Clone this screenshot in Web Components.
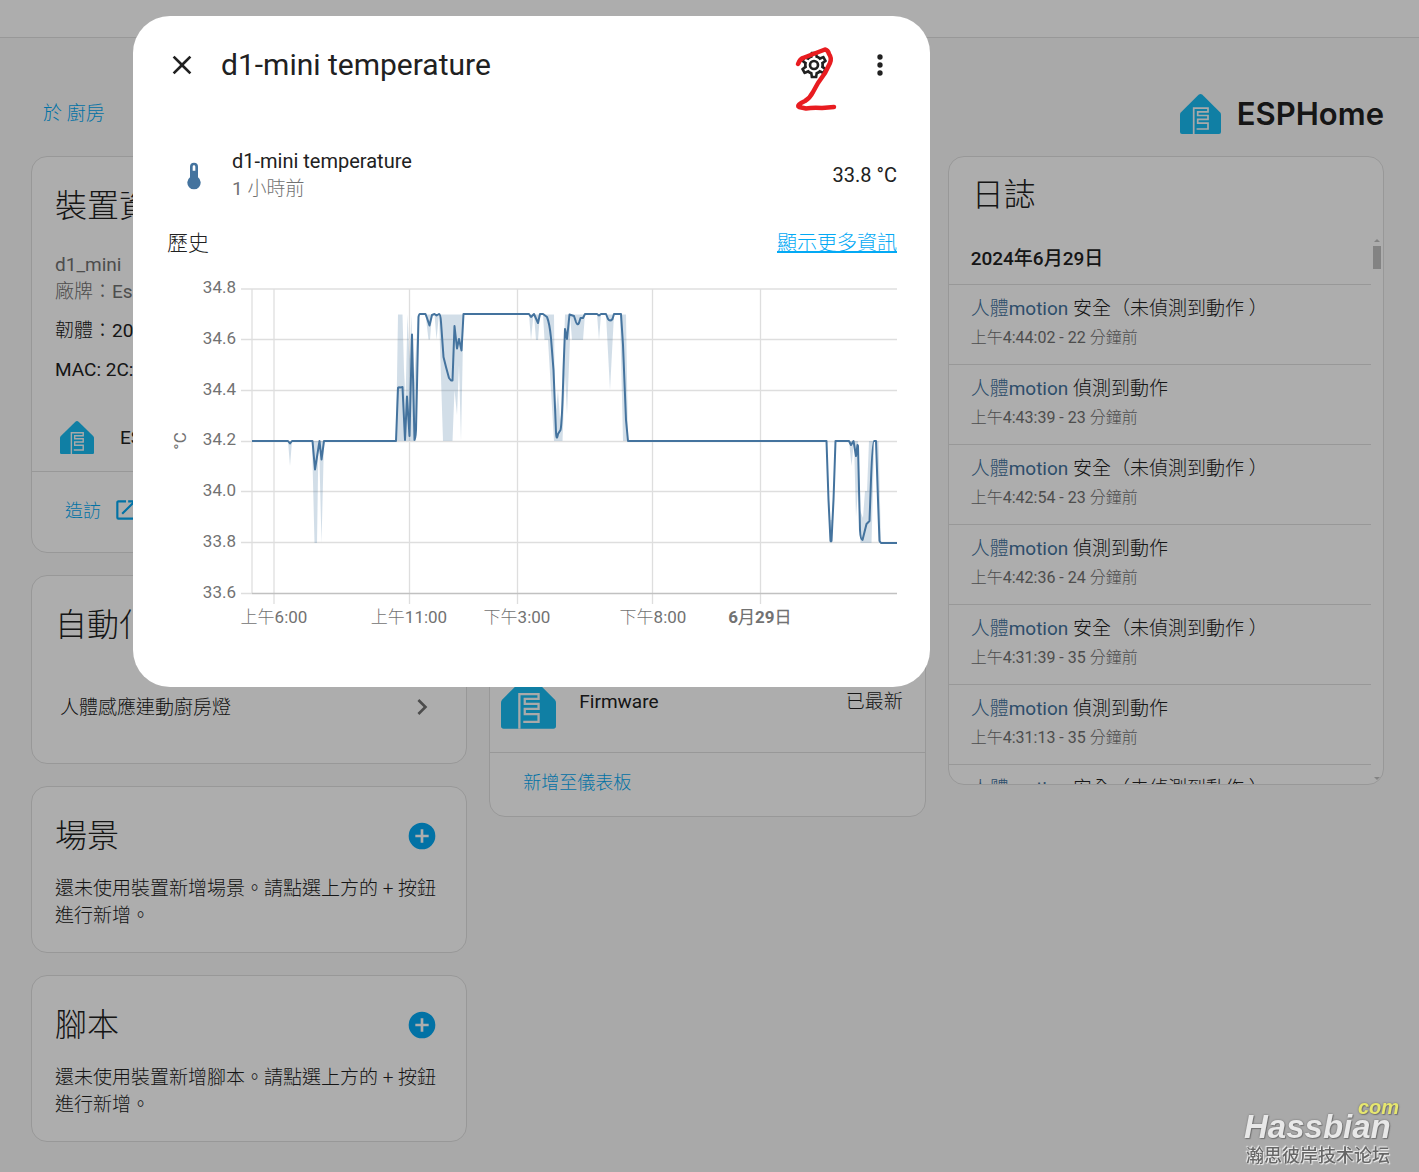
<!DOCTYPE html>
<html lang="zh-Hant">
<head>
<meta charset="utf-8">
<title>d1-mini</title>
<style>
html, body { margin: 0; height: 100%; }
body {
  --primary: #03a9f4; --text: #212121; --text2: #727272; --divider: #e0e0e0; --state: #44739e;
  background: #fafafa; color: var(--text); overflow: hidden;
  font: 400 19px/27px Roboto, "Noto Sans CJK TC Light", "Noto Sans CJK TC", sans-serif;
}
</style>
</head>
<body>
<device-page></device-page>
<more-info-dialog></more-info-dialog>
<site-mark></site-mark>
<script>
const define = (name, html, setup) => {
  const t = document.createElement('template');
  t.innerHTML = '<style>*{box-sizing:border-box}button{font:inherit;color:inherit;background:none;border:0;padding:0;margin:0;cursor:pointer}h1,h2,h3,p{margin:0;font-weight:400}a{color:var(--primary);text-decoration:none}</style>' + html;
  customElements.define(name, class extends HTMLElement {
    constructor() {
      super();
      const content = t.content.cloneNode(true);
      if (setup) setup(this, content);
      this.attachShadow({ mode: 'open' }).append(content);
    }
  });
};

const ICONS = {
  close: 'M19,6.41L17.59,5L12,10.59L6.41,5L5,6.41L10.59,12L5,17.59L6.41,19L12,13.41L17.59,19L19,17.59L13.41,12L19,6.41Z',
  cog: 'M12,8A4,4 0 0,1 16,12A4,4 0 0,1 12,16A4,4 0 0,1 8,12A4,4 0 0,1 12,8M12,10A2,2 0 0,0 10,12A2,2 0 0,0 12,14A2,2 0 0,0 14,12A2,2 0 0,0 12,10M10,22C9.75,22 9.54,21.82 9.5,21.58L9.13,18.93C8.5,18.68 7.96,18.34 7.44,17.94L4.95,18.95C4.73,19.03 4.46,18.95 4.34,18.73L2.34,15.27C2.21,15.05 2.27,14.78 2.46,14.63L4.57,12.97L4.5,12L4.57,11L2.46,9.37C2.27,9.22 2.21,8.95 2.34,8.73L4.34,5.27C4.46,5.05 4.73,4.96 4.95,5.05L7.44,6.05C7.96,5.66 8.5,5.32 9.13,5.07L9.5,2.42C9.54,2.18 9.75,2 10,2H14C14.25,2 14.46,2.18 14.5,2.42L14.87,5.07C15.5,5.32 16.04,5.66 16.56,6.05L19.05,5.05C19.27,4.96 19.54,5.05 19.66,5.27L21.66,8.73C21.79,8.95 21.73,9.22 21.54,9.37L19.43,11L19.5,12L19.43,13L21.54,14.63C21.73,14.78 21.79,15.05 21.66,15.27L19.66,18.73C19.54,18.95 19.27,19.04 19.05,18.95L16.56,17.95C16.04,18.34 15.5,18.68 14.87,18.93L14.5,21.58C14.46,21.82 14.25,22 14,22H10M11.25,4L10.88,6.61C9.68,6.86 8.62,7.5 7.85,8.39L5.44,7.35L4.69,8.65L6.8,10.2C6.4,11.37 6.4,12.64 6.8,13.8L4.68,15.36L5.43,16.66L7.86,15.62C8.63,16.5 9.68,17.14 10.87,17.38L11.24,20H12.76L13.13,17.39C14.32,17.14 15.37,16.5 16.14,15.62L18.57,16.66L19.32,15.36L17.2,13.81C17.6,12.64 17.6,11.37 17.2,10.2L19.31,8.65L18.56,7.35L16.15,8.39C15.38,7.5 14.32,6.86 13.12,6.62L12.75,4H11.25Z',
  dots: 'M12,16A2,2 0 0,1 14,18A2,2 0 0,1 12,20A2,2 0 0,1 10,18A2,2 0 0,1 12,16M12,10A2,2 0 0,1 14,12A2,2 0 0,1 12,14A2,2 0 0,1 10,12A2,2 0 0,1 12,10M12,4A2,2 0 0,1 14,6A2,2 0 0,1 12,8A2,2 0 0,1 10,6A2,2 0 0,1 12,4Z',
  thermometer: 'M15 13V5A3 3 0 0 0 9 5V13A5 5 0 1 0 15 13M12 4A1 1 0 0 1 13 5V8H11V5A1 1 0 0 1 12 4Z',
  chevron: 'M8.59,16.58L13.17,12L8.59,7.41L10,6L16,12L10,18L8.59,16.58Z',
  plus: 'M17,13H13V17H11V13H7V11H11V7H13V11H17M12,2A10,10 0 0,0 2,12A10,10 0 0,0 12,22A10,10 0 0,0 22,12A10,10 0 0,0 12,2Z',
  open: 'M14,3V5H17.59L7.76,14.83L9.17,16.24L19,6.41V10H21V3M19,19H5V5H12V3H5C3.89,3 3,3.9 3,5V19A2,2 0 0,0 5,21H19A2,2 0 0,0 21,19V12H19V19Z'
};

define('mdi-icon', `<style>:host{display:block;width:32px;height:32px;flex:none}svg{display:block;width:100%;height:100%;fill:currentColor}</style>
<svg viewBox="0 0 24 24" aria-hidden="true"><path fill-rule="evenodd"/></svg>`,
  (el, root) => root.querySelector('path').setAttribute('d', ICONS[el.getAttribute('name')]));

define('esphome-logo', `<style>:host{display:block;width:41px;flex:none}svg{display:block;width:100%}</style>
<svg viewBox="0 0 41 40" aria-hidden="true">
<path fill="#18bcf2" d="M18.6.8Q20.500-.8 22.400.8L40 18.200Q41 19.200 41 20.600V38Q41 40 39 40H2Q0 40 0 38V20.600Q0 19.200 1 18.200Z"/>
<path fill="none" stroke="#fafafa" stroke-width="1.700" d="M13.700 40V14.200H28V17.800H17.700V21.500H28V25.300H17.700V29.200H28V35H16.600"/></svg>`);

define('ui-card', `<style>
:host{display:flex;flex-direction:column;background:#fff;border:1px solid var(--divider);border-radius:16px;overflow:hidden}
header{display:flex;align-items:center;justify-content:space-between;padding:25px 28px 15px 23px}
h2{font-size:32px;line-height:48px;font-weight:300}
footer{border-top:1px solid var(--divider);padding:20px 33px 24px;font-weight:300}
footer.none,header.none{display:none}
</style>
<header><h2></h2><slot name="action"></slot></header><slot></slot><footer><slot name="footer"></slot></footer>`,
  (el, root) => {
    const h = el.getAttribute('heading');
    root.querySelector('h2').textContent = h || '';
    if (!h) root.querySelector('header').className = 'none';
    if (!el.querySelector('[slot=footer]')) root.querySelector('footer').className = 'none';
  });

define('empty-card', `<style>:host{display:block}p{padding:0 23px 23px;font-weight:300}button{color:var(--primary);display:block}</style>
<ui-card><button slot="action"><mdi-icon name="plus"></mdi-icon></button><p></p></ui-card>`,
  (el, root) => {
    const n = el.getAttribute('kind');
    root.querySelector('ui-card').setAttribute('heading', n);
    root.querySelector('button').setAttribute('aria-label', '新增' + n);
    root.querySelector('p').textContent = `還未使用裝置新增${n}。請點選上方的 + 按鈕進行新增。`;
  });

define('logbook-entry', `<style>
:host{display:block;border-top:1px solid var(--divider);padding:10px 22px 14px}
span{font-weight:300}
a{color:var(--state)}time{display:block;font-size:16px;line-height:24px;padding-top:4px;height:28px;color:var(--text2)}
</style><div><a href="#">人體motion</a> <span><slot></slot></span></div><time></time>`,
  (el, root) => root.querySelector('time').textContent = el.getAttribute('time'));

define('logbook-card', `<style>
:host{display:block}
ui-card{height:629px}
h2{font-size:32px;line-height:48px;font-weight:300;padding:14px 23px 19px}
.body{display:flex;flex:1;min-height:0}
.list{flex:1;overflow:hidden}
h3{font-size:19px;font-weight:500;line-height:27px;padding:7px 22px 12px;font-family:Roboto,"Noto Sans CJK TC",sans-serif}
.bar{width:12px;display:flex;flex-direction:column;align-items:center;padding:1px 0 4px}
.bar i{border:3px solid transparent;border-top:0;border-bottom-color:#c1c1c1}
.bar b{width:8px;height:23px;background:#c1c1c1;margin:4px 0 auto}
.bar i:last-child{border-top:3px solid #c1c1c1;border-bottom:0}
</style>
<ui-card><h2>日誌</h2><div class="body"><div class="list"><h3>2024年6月29日</h3>
<logbook-entry time="上午4:44:02 - 22 分鐘前">安全（未偵測到動作 ）</logbook-entry>
<logbook-entry time="上午4:43:39 - 23 分鐘前">偵測到動作</logbook-entry>
<logbook-entry time="上午4:42:54 - 23 分鐘前">安全（未偵測到動作 ）</logbook-entry>
<logbook-entry time="上午4:42:36 - 24 分鐘前">偵測到動作</logbook-entry>
<logbook-entry time="上午4:31:39 - 35 分鐘前">安全（未偵測到動作 ）</logbook-entry>
<logbook-entry time="上午4:31:13 - 35 分鐘前">偵測到動作</logbook-entry>
<logbook-entry time="">安全（未偵測到動作 ）</logbook-entry>
</div><div class="bar"><i></i><b></b><i></i></div></div></ui-card>`);

define('device-page', `<style>
:host{display:block}
.bar{height:38px;background:#fff;border-bottom:1px solid var(--divider)}
.top{display:flex;justify-content:space-between;align-items:center;padding:55px 35px 22px 43px}
.top a{font-weight:300}
.brand{display:flex;align-items:center;gap:16px;height:41px;font:600 31px/40px Inter,sans-serif}
main{display:grid;grid-template-columns:repeat(3,minmax(0,1fr));gap:22px;padding:0 35px 0 31px;align-items:start}
.col{display:flex;flex-direction:column;gap:22px}
.info{display:grid;gap:12px;padding:6px 23px 0;white-space:nowrap}
.info p:first-child{color:var(--text2)}
.integ{display:flex;align-items:center;gap:26px;padding:38px 28px 17px}
.integ esphome-logo{width:34px}
.visit{display:flex;align-items:center;gap:12px;height:36px;font-size:18px}
.visit mdi-icon{width:26px;height:26px}
.auto{display:flex;align-items:center;justify-content:space-between;width:100%;padding:27px 28px 40px 28px;text-align:left;font-weight:300}
.auto mdi-icon{color:var(--text2)}
.controls{display:flex;flex-direction:column;justify-content:flex-end;min-height:595px}
.row{display:flex;align-items:flex-start;padding:0 22px 23px 11px}
.row esphome-logo{width:55px}
.row span{flex:1;padding:13px 0 0 23px}.row output{padding-top:13px;font-weight:300}
.add{font-size:18px;line-height:19px;display:block;height:19px}
</style>
<div class="bar"></div>
<div class="top"><a href="#">於 廚房</a><div class="brand"><esphome-logo></esphome-logo>ESPHome</div></div>
<main>
<div class="col">
<ui-card heading="裝置資訊">
<div class="info"><p>d1_mini<br>廠牌：Espressif</p><p>韌體：2024.6.4</p><p>MAC: 2C:F4:32</p></div>
<div class="integ"><esphome-logo></esphome-logo><span>ESPHome</span></div>
<a slot="footer" class="visit" href="#">造訪<mdi-icon name="open"></mdi-icon></a>
</ui-card>
<ui-card heading="自動化"><button class="auto">人體感應連動廚房燈<mdi-icon name="chevron"></mdi-icon></button></ui-card>
<empty-card kind="場景"></empty-card>
<empty-card kind="腳本"></empty-card>
</div>
<div class="col">
<ui-card><div class="controls"><div class="row"><esphome-logo></esphome-logo><span>Firmware</span><output>已最新</output></div></div>
<a slot="footer" class="add" href="#">新增至儀表板</a></ui-card>
</div>
<div class="col"><logbook-card></logbook-card></div>
</main>`);

define('history-chart', `<style>
:host{display:block}svg{display:block;width:100%;overflow:visible}
text{font-size:17px;fill:#727272}
.y{text-anchor:end}.x{text-anchor:middle}
.grid{stroke:#000;stroke-opacity:.13;stroke-width:1.300;fill:none}
.band{fill:#44739e;fill-opacity:.24}.line{fill:none;stroke:#44739e;stroke-width:2;stroke-linejoin:round}
</style>
<svg viewBox="167 270 730 370" role="img" aria-label="歷史">
<path class="grid" d="M241 289H897M241 339.500H897M241 390.500H897M241 441.500H897M241 491.500H897M241 542.500H897M241 593.500H897M252 289V594M274 289V604M409.500 289V604M517.500 289V604M652.500 289V604M760.500 289V604"/>
<path class="grid" d="M252 593.500H897"/>
<g class="y"><text x="236" y="293">34.8</text><text x="236" y="344">34.6</text><text x="236" y="395">34.4</text><text x="236" y="445">34.2</text><text x="236" y="496">34.0</text><text x="236" y="547">33.8</text><text x="236" y="598">33.6</text></g>
<g class="x"><text x="274" y="623">上午6:00</text><text x="409" y="623">上午11:00</text><text x="517" y="623">下午3:00</text><text x="653" y="623">下午8:00</text><text x="760" y="623" font-weight="700">6月29日</text><text transform="translate(186 441) rotate(-90)">°C</text></g>
<path class="band" d="M288 441L290 466L292 441ZM312 441L314.500 543H317L318.500 441ZM319 441L321.500 543L324 441ZM396 441L398 314.500H402.500L404 370L405.500 400L407.500 314.500L409.500 360L411.500 314.500L413 400L418 314.500V320L416 441ZM425.500 314.500L428.500 339.500H430L432 314.500ZM434.500 314.500L436.500 339.500L439 314.500ZM439 314.500L443 441H452.500L454.500 390L457 415L459 365L461 441L463.500 314.500ZM529 314.500L531 340L533.500 314.500ZM534 314.500L536 340H538L540 314.500ZM543 314.500L544.500 340H548L554 441H562.500L565 375L567 415L570 339.500V314.500H565L562 410L560 420L558 390L555 420L554 314.500ZM570 314.500L572 340H583L585 314.500ZM597 314.500L599 340L601 314.500ZM606 314.500L610 390L614 314.500ZM620 314.500H626L628 441H623ZM826.500 441L830 543H832L835.500 441L832 520H830ZM849 441L851.500 466L854 441ZM854 441L856 517L858 490L860.500 543H871.500L874 450L873 441H869L867 491H865L863 518L860 510L858 441ZM876 441H878.500L881 543H879Z"/>
<path class="line" d="M252 441H288L290 443.500L292 441H312.500L315 469.500L319.500 441L321.500 459.500L324 441H396L398 388Q398 387 400 387.500Q402 387 402.500 387L405 440L407 396.500L409.500 436L412 334.500L414.500 440Q415.500 440 416 430L418.500 317Q419 314 420 314H425.500L427 318L429.500 325.500L432 315L434.500 314L436.500 315.500L439 314Q440.500 314 441 322L443.500 357L446 367L449 378L451 380.500H452.500L454.500 326L457 348.500L459 339L461.500 350.500L463.500 314H529L531 317L534 314L538 323L540 314H543L547 317Q549.500 323 551 338L553.500 370L556 432Q556.500 442 558 434L560.500 430Q562 425 563.500 370L565 329L567 339L569.500 314.500L574 316L576 322Q577.500 326 579 323L580.500 318H583L585 314H597L599 315.500L601 314H606L608 319Q610 322 612.500 319L614 314H621L623 345L626 420L628 441H826.500L828.500 500L830.500 541H831.500L833.500 500L835.500 441H849L851 445L853.500 441L856 456L857.500 445L858 446L860 530Q860.500 540 862.500 540L864 534L866.500 524L869.500 521L871 480Q872.500 441 874 441H876L878 500L879.500 541L881 543H897"/>
</svg>`);

define('more-info-dialog', `<style>
:host{position:fixed;inset:0;background:rgba(0,0,0,.32);display:flex;align-items:flex-start;padding:16px 16px 16px 133px}
section{width:797px;max-width:100%;background:#fff;border-radius:37px;padding:17px 33px 47px 34px}
header{display:flex;align-items:center;gap:2px;margin:0 -15px 0 -17px}
header button{width:64px;height:64px;display:grid;place-items:center;position:relative}
h1{flex:1;font-size:30px;line-height:40px;padding-left:5px}
.mark{position:absolute;left:12px;top:11px;width:44px;height:68px;overflow:visible;pointer-events:none}
.state{display:flex;align-items:center;gap:22px;padding:51px 0 0 11px;font-size:20px}
.state mdi-icon{color:var(--state)}
.state div{flex:1}.state small{display:block;font-size:19px;line-height:28px;color:var(--text2)}
.title{display:flex;justify-content:space-between;align-items:center;padding:26px 0 13px}
h2{font-size:21px;line-height:28px}
.title a{font-size:20px;line-height:28px;text-decoration:underline}
.title h2,.title a{font-weight:300}
</style>
<section role="dialog" aria-label="d1-mini temperature">
<header><button aria-label="關閉"><mdi-icon name="close"></mdi-icon></button><h1>d1-mini temperature</h1>
<button aria-label="設定"><mdi-icon name="cog"></mdi-icon>
<svg class="mark" viewBox="794 44 44 68" aria-hidden="true"><path fill="none" stroke="#e81c20" stroke-width="4.500" stroke-linecap="round" stroke-linejoin="round" d="M798 64Q800 59 803 58L812 54.500L825 49.500Q828 50 829 54Q832 58 830 63L825 73L818 83L813 92Q810 98 805 101Q796 105 799 107L806 108.500Q812 107.500 822 108L834 107"/></svg></button>
<button aria-label="更多"><mdi-icon name="dots"></mdi-icon></button></header>
<div class="state"><mdi-icon name="thermometer"></mdi-icon><div>d1-mini temperature<small>1 小時前</small></div><output>33.8 °C</output></div>
<div class="title"><h2>歷史</h2><a href="#">顯示更多資訊</a></div>
<history-chart></history-chart>
</section>`);

define('site-mark', `<style>
:host{position:fixed;right:20px;bottom:6px;width:155px;pointer-events:none;display:grid;color:#e8e8e8}
.com{justify-self:end;font:italic 700 20px/14px "Liberation Sans",sans-serif;color:#e6e670;text-shadow:0 0 2px #666,1px 1px 1px #777}
.name{font:italic 700 33px/24px "Liberation Sans",sans-serif;text-shadow:0 0 2px #666,1px 1px 1px #777;padding-top:1px}
.sub{font:500 18px/24px "Noto Sans CJK SC",sans-serif;color:#666;padding:3px 0 0 2px;text-shadow:0 0 1px #fff,1px 1px 1px #eee,-1px -1px 1px #eee}
</style><span class="com">com</span><span class="name">Hassbian</span><span class="sub" lang="zh-Hans">瀚思彼岸技术论坛</span>`);
</script>
</body>
</html>
